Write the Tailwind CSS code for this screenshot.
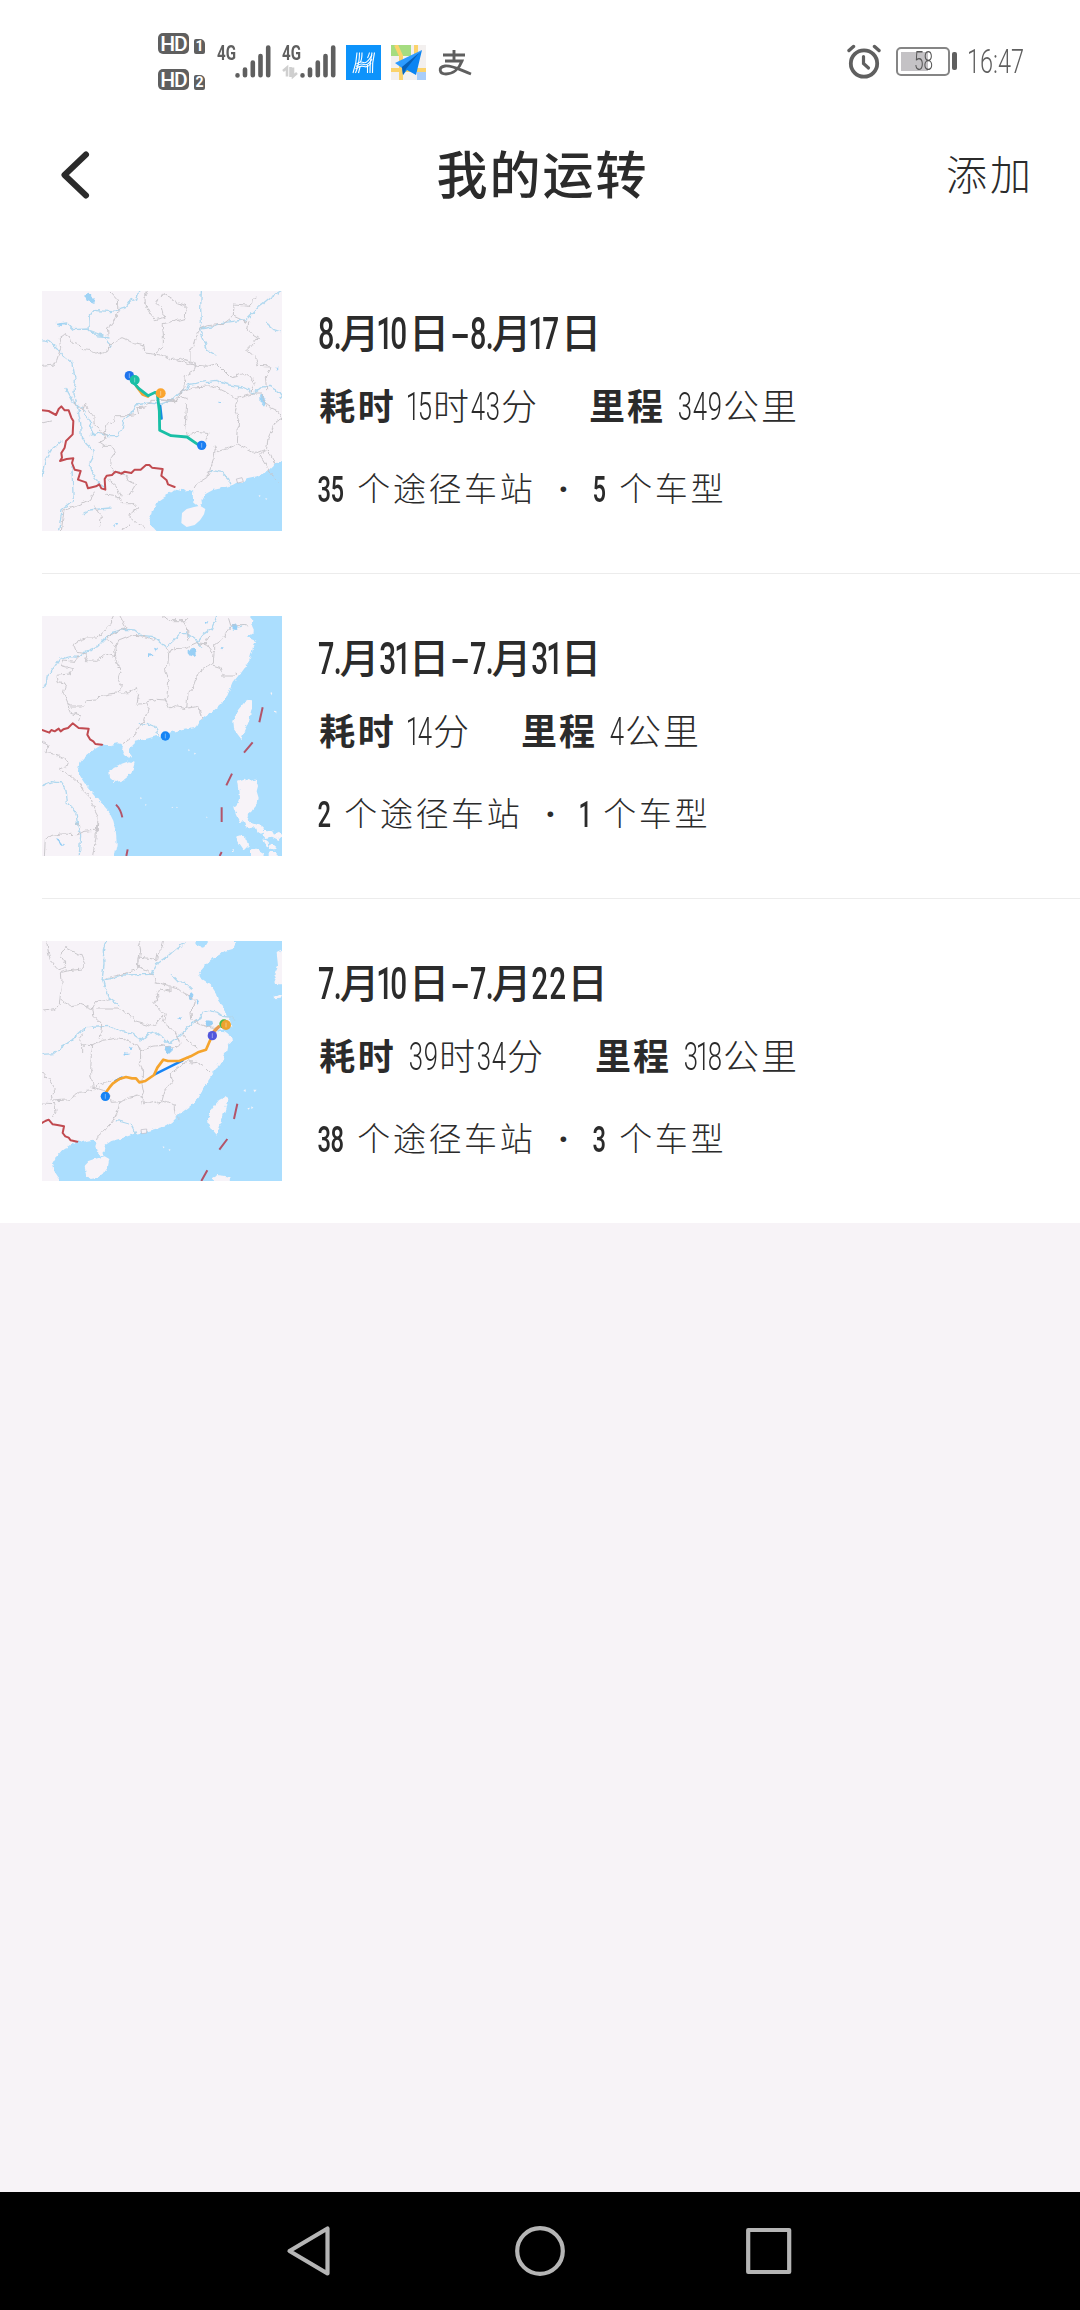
<!DOCTYPE html>
<html lang="zh-CN">
<head>
    <meta charset="UTF-8">
    <meta name="viewport" content="width=device-width, initial-scale=1.0">
    <title>我的运转</title>
    <script src="https://cdn.jsdelivr.net/npm/@tailwindcss/browser@4"></script>
</head>
<body class="w-[1080px] h-[2310px] flex flex-col bg-[#f7f3f7] text-[#2b2b2b] font-[Roboto,'Noto_Sans_CJK_SC',sans-serif] overflow-hidden">

    <!-- Status bar -->
    <header class="h-[122px] shrink-0 bg-white flex justify-between pl-[158px] pr-[55px] text-[#5f5f5f]">
        <div class="flex h-full">
            <div class="flex flex-col gap-[15px] pt-[33px] w-[59px]">
                <div class="flex items-end gap-[5px]">
                    <span class="w-[31px] h-[21px] rounded-[5px] bg-[#5f5f5f] text-white text-[21px] font-medium leading-[22px] text-center tracking-[-1px]">HD</span>
                    <span class="w-[11px] h-[15px] rounded-[2px] rounded-tr-[5px] bg-[#5f5f5f] text-white text-[14px] font-bold leading-[15px] text-center">1</span>
                </div>
                <div class="flex items-end gap-[5px]">
                    <span class="w-[31px] h-[21px] rounded-[5px] bg-[#5f5f5f] text-white text-[21px] font-medium leading-[22px] text-center tracking-[-1px]">HD</span>
                    <span class="w-[11px] h-[15px] rounded-[2px] rounded-tr-[5px] bg-[#5f5f5f] text-white text-[14px] font-bold leading-[15px] text-center">2</span>
                </div>
            </div>
            <div class="flex pt-[43px] w-[65px]">
                <span class="w-[18px] h-5 leading-5"><span class="inline-block origin-left scale-x-[.72] text-[21px] font-bold">4G</span></span>
                <svg class="w-9 h-9" viewBox="0 0 36 36" stroke="#5f5f5f" stroke-width="4.6" stroke-linecap="round"><path d="M2.5 32.4v.1M10 26.500v5.800M17.800 19.500v12.800M25.500 13v19.300M33.200 4.500v27.800"/></svg>
            </div>
            <div class="flex pt-[43px] w-[64px]">
                <div class="w-[18px]">
                    <div class="h-5 leading-5"><span class="inline-block origin-left scale-x-[.72] text-[21px] font-bold">4G</span></div>
                    <svg class="w-4 h-4" viewBox="0 0 16 16" fill="none" stroke="#cfcfcf" stroke-width="2.600"><path d="M1 8l4-3.500v9M15 10l-4 3.500v-9M8.500 4v10"/></svg>
                </div>
                <svg class="w-9 h-9" viewBox="0 0 36 36" stroke="#5f5f5f" stroke-width="4.6" stroke-linecap="round"><path d="M2.5 32.4v.1M10 26.500v5.800M17.800 19.500v12.800M25.500 13v19.300M33.200 4.500v27.800"/></svg>
            </div>
            <div class="flex gap-[10px] pt-[45px]">
                <svg class="w-[35px] h-[35px]" viewBox="0 0 35 35" fill="none">
                    <rect width="35" height="35" fill="#0d93fb"/>
                    <g stroke="#fff" stroke-width="1.1">
                        <path d="M11 7.500Q10.500 18 7 28M13.500 7.500Q13.500 19 9.500 28M16 7.500Q16 14 14.500 17M12.500 28L14 22"/>
                        <path d="M28.500 7.500Q26 18 26.500 28M26 7.500Q23.500 18 24 28M23.500 7.500Q23 10 21.500 13M21.500 28V20"/>
                        <path d="M10.500 19Q14 16 17.500 17.500T26 10M10 21.500Q14 18 18 19.500T26 14M9.500 24Q14 20 18 21.500T25 18"/>
                    </g>
                </svg>
                <svg class="w-[35px] h-[35px]" viewBox="0 0 35 35">
                    <rect width="35" height="35" fill="#f3f0ef"/>
                    <path d="M0 0h20v11H0z" fill="#a5dc80"/>
                    <path d="M26 26h9v9h-9z" fill="#a8cdfa"/>
                    <path d="M5 0l5 11v24M0 25h35M25 0v12" stroke="#fbd36b" stroke-width="4" fill="none"/>
                    <path d="M31 5L4 18l7 5z" fill="#2d9bff"/>
                    <path d="M31 5L11 22l1 8 4-5 9 5z" fill="#0a84f2"/>
                    <path d="M28 8L11 22l1 8 3-6z" fill="#0860b8"/>
                </svg>
                <svg class="w-[36px] h-[35px] ml-[1px]" viewBox="0 0 36 35" fill="none" stroke="#5f5f5f" stroke-width="2.900">
                    <path d="M6 10h22M17 5v11M8 16h17C22 24 16 29 9 29 2 29 1 22 8 21 15 20 23 25 34 29"/>
                </svg>
            </div>
        </div>
        <div class="flex h-full">
            <svg class="w-[34px] h-[35px] mt-[44px]" viewBox="0 0 34 35" fill="none" stroke="#5f5f5f" stroke-linecap="round">
                <circle cx="17" cy="19.500" r="13.200" stroke-width="3.800"/>
                <path d="M16.500 12.500v7l5 4.500" stroke-width="3.200"/>
                <path d="M2 6.500l4.500-4M32 6.500l-4.500-4" stroke-width="3.400"/>
            </svg>
            <div class="w-[54px] h-[29px] mt-[47px] ml-[15px] border-2 border-[#858585] rounded-[5px] p-[3px] relative">
                <div class="w-[27px] h-full bg-[#c4c2c5]"></div>
                <span class="absolute left-[16px] top-0 leading-[25px] text-[26px] font-light text-[#555] origin-left scale-x-[.66]">58</span>
            </div>
            <div class="w-[5px] h-[18px] mt-[52px] ml-[2px] rounded-[2px] bg-[#5f5f5f]"></div>
            <div class="w-[58px] h-9 mt-[43px] ml-[10px]"><span class="inline-block origin-left scale-x-[.69] text-[34px] leading-9 font-light">16:47</span></div>
        </div>
    </header>

    <!-- Title bar -->
    <div class="h-[127px] shrink-0 bg-white flex justify-between pl-[58px] pr-[46px]">
        <div class="w-[81px] pt-[28px]">
            <svg class="w-[34px] h-[50px]" viewBox="0 0 34 50" fill="none" stroke="#2b2b2b" stroke-width="6" stroke-linecap="round" stroke-linejoin="round"><path d="M28 4.500L6.500 25 28 45.500"/></svg>
        </div>
        <h1 class="pt-[20px] h-[70px] leading-[70px] text-[51px] tracking-[2px] font-medium">我的运转</h1>
        <div class="pt-[19px] h-[70px] leading-[70px] text-[41px] tracking-[3px] font-light">添加</div>
    </div>

    <!-- Trip list -->
    <main class="bg-white pl-[42px] shrink-0">
        <section class="flex gap-9 py-[42px] h-[325px] border-b border-[#ececec]">
            <svg class="w-[240px] h-[240px] shrink-0" viewBox="36 34 720 720" fill="none" stroke-linejoin="round" stroke-linecap="round">
                <!-- roughens coasts, rivers and borders -->
                <filter id="rough" filterUnits="userSpaceOnUse" x="0" y="0" width="800" height="800" color-interpolation-filters="sRGB">
                    <feTurbulence type="fractalNoise" baseFrequency="0.06" numOctaves="2" seed="4"/>
                    <feDisplacementMap in="SourceGraphic" scale="16" xChannelSelector="R" yChannelSelector="G"/>
                </filter>
                <path fill="#f7f3f8" d="M36 34h720v720H36z"/>
                <path filter="url(#rough)" fill="#abdefe" d="M796 522l-40 20-18 10-18 18-22 12-20 8-28 6-12 14-16-2-14 8-30 8-28 6-18 10-12 8-6 10 2 14-10 6-16-12-2-14 2-16-12-6-22 4-18-4-14 6-20 14-16 10-12 18-10 16-4 16-6 12 6 14 12 12 12 16V796H796z"/>
                <path fill="#f7f3f8" d="M456 700l14-12 22-6 18-4 16 10-4 16-12 18-16 14-24 6-16-12zM686 646l6 2-4 4zM706 655l6 2-4 4z"/>
                <path stroke="#b9b9c2" stroke-width="2" fill="#f7f3f8" d="M620 598l16-4 4 12-16 4z"/>
                <g filter="url(#rough)" stroke="#b0d8ef" stroke-width="4">
                    <path d="M36 180l24 6 22 20 14 20 30 24 10 50-4 40 10 40 10 50 2 46 18 20 20 16-2 20-12 22 10 24 14 30 20 14M108 326l22 40 26 20 16 26 14 30-2 24 24-8 30 10 26 0 12-20 6-30 20-14 14-28 40-6 34 4 34-12 20-20 20-12 14-16 50-8 30-4 40 14 40 6 34 18 22-18 24-2 24 14 14 20 24-20 20 0 20-16M514 34l-2 50 2 40-6 24 40-6 40-14 60-8 34-34 40-34 30-18M508 148l14 30 10 34 26 14M80 134l30-4 20 20 44-2 26 20 40 4M244 200l-28-34-38-14-2-40 16-20 50 4 40-10 14-20 24-8 6-24M36 590l10-50 20-32 30-24M126 560l2 60 2 44-34 26-10 60M240 685l-60 6-20 14M540 572l36 6 20 20 6 14M710 130l22 20 18 6"/>
                </g>
                <path filter="url(#rough)" fill="#9fd3f5" d="M162 48l14-6 18 14-4 14-16-6zM76 134l26-4-4 10zM690 344l12 6 8 14-8 14-10-12zM735 264l12 0-6 6zM252 734l10-2-4 8zM564 366l20 2-16 4z"/>
                <g filter="url(#rough)" stroke="#c6c4c8" stroke-width="2.800">
                    <path d="M36 260l36-4 8-14 12-36-4-30 16-12 18 10 4 16 24 8 10 12 30 4 16 10 26-8 4-14 22-20 18-8 14 6 22 12 30 6 2 22 50 6 30 14 28-4 24 8 22 10-6 20-26 14-4 30-14 28-14 20-38-4-30 0-20 20-24 2 4 20-36 4-34 0-2 18-26 8-6 24 6 20-22 12 14 10 24 0 12 18-12 16-2 26 10 16 30 6 16 22 22 10-12 20-14 8M444 240l36 14 50 6 30-8 40 40 40-10 20 10 14 20-12 26M480 252v-44l10-4 18-58M508 148l24-10 46-4 32-24 2-34 48 4 18-28M612 110l44 20-4 22 34 20-24 30-12 12 28 22 6 24 40 2-18 30 4 40M240 34l22 24 2 40-14 34-18 10 2 24M344 34l2 40 12 24 18 22 26-6-8-30-16-16 24-26 40 26 26 10-2 38-46 12-24 4 4 30 0 40-24 20M448 338l40-16 60-4 50 24 20 16 56-18 20 0 16 38 30 14 16 24-20 10-22 50-4 30-20 22 18 30 14 22 22 26M470 372l-4 60 6 34 30-8 32 4-6 22M472 360l-20-8-18 12-44-4M624 360l-8 36 10 26-4 70-30 14-30 10-10-14M556 502l-4 34-12 34-10 24-30 18-8 14M622 492l54 30 30-12 16 14 14 30M352 34l-10 20M130 364l12 14 16 18 6-22 20 30 8 10 0 20 26 24 16 10"/>
                    <path d="M190 640l-12 20-40 20-36 12-8 60M230 644l30 4 16 24 36 0 14 14-30 20 20 20 30 20M234 600l24 20 14 32M36 430l26-6M210 740l4-28-20-30M276 750l22-14"/>
                </g>
                <path stroke="#c14a50" stroke-width="6" d="M36 392l20 2 22 12 8-18 8-8 10 12 12 0 8 22 6 10-2 40-20 20-4 20-10 16 2 14-6 10 20-6 20-2-4 14 8 20 18 4-8 26 24 8 6 18 24-6 10-6 6 12 12 4-2-32 6-10 16-2 10-10 18 6 10-6 20 4 10-10 18 0 16-14 10 0 8 8 32 4-4 20 16 14 4 12 20 8"/>
                <g stroke-width="9">
                    <path stroke="#f2a134" d="M320 320l18 24 16 6"/>
                    <path stroke="#168be0" d="M390 380l4 36"/>
                    <path stroke="#19bfa6" stroke-width="8.500" d="M306 304l20 22 28 22 22-10 6 6 6 50 1 58 34 16 48 4 32 22"/>
                </g>
                <circle cx="298" cy="288" r="14" fill="#1f73ed"/>
                <circle cx="314" cy="301" r="15" fill="#19bfa6"/>
                <circle cx="392" cy="341" r="15" fill="#fba52f"/>
                <circle cx="515" cy="497" r="14" fill="#1b7ef2"/>
                <path stroke="#fff" stroke-opacity=".6" stroke-width="2" d="M298 282v12M314 295v12M392 335v12M515 491v12"/>
            </svg>
            <div class="flex flex-col pt-[13px]">
                <div data-date="8.月10日-8.月17日" class="h-[60px] flex items-center font-medium"></div>
                <div data-time="15时43分" data-mileage="349公里" class="h-[87px] flex items-center"></div>
                <div data-stations="35" data-models="5" class="h-[77px] flex items-center"></div>
            </div>
        </section>

        <section class="flex gap-9 py-[42px] h-[325px] border-b border-[#ececec]">
            <svg class="w-[240px] h-[240px] shrink-0" viewBox="36 36 720 720" fill="none" stroke-linejoin="round" stroke-linecap="round">
                <path fill="#abdefe" d="M36 36h720v720H36z"/>
                <path filter="url(#rough)" fill="#f7f3f8" d="M5 5H650L660 36 670 48 666 68 672 82 650 96 662 104 678 112 670 124 666 142 658 170 642 192 626 214 608 236 598 260 588 284 570 304 546 324 526 338 508 350 498 368 458 376 434 382 404 392 372 398 344 406 312 414 298 428 298 442 302 452 296 464 282 454 276 436 280 422 264 418 240 424 216 422 196 434 180 446 162 462 148 478 144 498 152 518 168 542 188 566 210 592 236 622 250 650 258 684 260 720 254 756V796H5z"/>
                <path filter="url(#rough)" fill="#f7f3f8" d="M238 502l14-14 24-8 24-8 14 4-6 22-12 18-18 14-24 4-14-12zM654 290l12 2 0 20-8 34-16 38-8 22-10-14-12-16-2-24 14-34 18-22zM624 530l18-6 20 6 16-4 6 20-4 16 6 20-14 22-6 20-14 12 6 18 24 8 14 4 8 18-10 4-18-16-20-6-10 4-4-18-14 2-10-22-8-22 12-4 8-20-2-28zM618 698l16-4 16 12 4 20-12 12-14-20zM676 670l14 6-2 10-10-4zM700 680l12 2 14-4 8 14 14-6 6 12-8 10-20-10-20 4-8-10zM700 702l16 12 2 16-12-8zM724 716l16 14-8 10-16-4zM660 736l20-2 22 14-4 28h-38zM716 744h24v30h-24zM604 738l8 2-4 6zM718 268l10-4-4 10zM734 320l10 2-8 4z"/>
                <path fill="#f7f3f8" d="M474 436l6 2-4 4zM492 446l6 2-4 4zM330 580l6 2-4 4zM346 600l4 2-4 4zM426 608l4 4-5 0zM440 608l4 4-5 0zM528 638l5 1-3 3z"/>
                <path filter="url(#rough)" stroke="#b0d8ef" stroke-width="4" d="M36 252l12-8 4-30 22-26 14-22 34-8 26 2 20-18 34-14 22-22 18-20 42-10 30 2 20 16 36 4 18 16 20 16 24-22 20-22 16 0 30 22 18 20M500 114l20-24 24-16 12-26 4-12M600 70l30-2 18-6M36 545l28-12 30 4 14 20 4 40 26 30 6 40 8 26-4 60M328 362l20-4 24 8 14 24"/>
                <path filter="url(#rough)" fill="#98cff5" d="M476 138l16-4 6 18-12 8-10-12zM372 128l12 4-6 12zM354 150l22 4-22 6zM606 62l14-4 2 20-14-2zM520 54l12-2-4 8zM570 130l8 0-4 6zM78 706l10 2 14 18-10-2z"/>
                <g filter="url(#rough)" stroke="#c6c4c8" stroke-width="2.800">
                    <path d="M250 36l-20 40-30 26-30 0-16 4-22 16 6 22 34 6-6 20 34 2 28-22 24 8 10-24-26-24-4-14 30-14 26-10-18-36M144 158l-8 14-38-4-6 16 36 10-10 16-40 4 4 22 26 4-8 26 18 40 40 0 12-16 30-2 16-14 36-6 22-18-10-26 8-26-14-30-4-30 12-30 30-12 30-2 24 6 26 8M264 268l32-2 22-14 8 20-6 30 30-6 6 12-12 40-20 24-10 20-16 14-18 12M352 294l28-8 26 2 14 28 16-8 30 6 40-8 10 40M406 132l10 16-2 32-10 24 12 30-6 50M416 148l18-14 30-2 36-16 30 4 22 28-2 30-20 10-26 20-12 36-18 24-4 46M554 140l0-16 24-18 18-32 20-12 36 0M550 184l20 6 6 26 34 0 10-8M458 50l14 22 4 40M400 36l20 14 50 0M524 120l12-20M602 64l-6-20M112 306l10 22 30 8-6 14M36 412l20 14-6 20 32 6 26 12 6 22-26 10 18 12 20 10 20 18 14 24 20 20 10 32 14 26-2 40-40 4-18 10-50-2-28 4-20 12-4 70M200 662l-2 40-10 52M150 666l-10-8"/>
                </g>
                <path stroke="#c14a50" stroke-width="6" d="M36 378l22 8 6-8 10 4 12-8 6 8 8-6 14-4 14-14 18 14 30 2-4 18 8 14 10 6 6 8 20 2"/>
                <path stroke="#b35469" stroke-width="6" stroke-linecap="butt" d="M698 310l-10 45M668 415l-26 31M606 509l-17 35M575 610v44M258 602q14 14 19 38M293 736l-4 20M575 744l-6 12"/>
                <circle cx="406" cy="396" r="14" fill="#1684f5"/>
                <path stroke="#fff" stroke-opacity=".6" stroke-width="2" d="M406 390v12"/>
            </svg>
            <div class="flex flex-col pt-[13px]">
                <div data-date="7.月31日-7.月31日" class="h-[60px] flex items-center font-medium"></div>
                <div data-time="14分" data-mileage="4公里" class="h-[87px] flex items-center"></div>
                <div data-stations="2" data-models="1" class="h-[77px] flex items-center"></div>
            </div>
        </section>

        <section class="flex gap-9 py-[42px] h-[324px]">
            <svg class="w-[240px] h-[240px] shrink-0" viewBox="36 34 720 720" fill="none" stroke-linejoin="round" stroke-linecap="round">
                <path fill="#abdefe" d="M36 34h720v720H36z"/>
                <path filter="url(#rough)" fill="#f7f3f8" d="M5 5H495L496 38 502 50 516 54 528 44 534 34V5H610V34L616 44 608 58 578 66 558 78 546 90 524 110 510 126 504 142 526 156 546 172 558 190 564 212 578 232 590 248 600 272 604 290 578 298 556 304 584 308 604 322 606 336 592 346 588 366 580 386 562 410 546 436 524 470 506 504 480 530 450 552 428 576 408 590 370 600 340 608 310 614 276 626 244 634 226 646 222 662 220 676 210 680 200 664 196 650 200 638 182 632 160 636 142 632 120 646 96 662 78 682 66 702 70 724 80 740 94 756V796H5zM740 70l16-8h40v102h-50l-14-4 8-20-6-10 10-22zM730 202l16-8 10 2-4 8-18 2z"/>
                <path filter="url(#rough)" fill="#f7f3f8" d="M164 708l14-14 24-8 22-6 14 8-4 22-16 22-16 12-20 4-14-12zM570 508l12-6 10 6-4 22-10 34-10 28-8 26-12-14-12-20-2-18 8-22 16-22zM548 742l12-6 22 2 16 4 6 32h-54z"/>
                <path fill="#f7f3f8" d="M640 484l6-6 2 8zM670 480h10l-6 8zM652 536l8-2-4 6zM664 530l6 4-6 4zM398 650l6 2-4 4zM416 658l6 2-4 4z"/>
                <path stroke="#b9b9c2" stroke-width="2" fill="#f7f3f8" d="M334 600l16-2 0 12-14 2z"/>
                <path filter="url(#rough)" stroke="#b0d8ef" stroke-width="4" d="M228 34l-8 30 2 40-6 48 40-8 20-8 90-2 16-34 30-20 30-26 20-12M218 154l8 24 14 30 26 18M36 374l34-2 26-22 24-14 26-24 20-18 40-2 34-2 34 16 30 4 30 22 20-20 20-6 30 24 14 10 30-22 18-16 20-20 24-16 6-16 20-8 26 6 16 12 24 2 12 10M424 136l20 20 20 2 20 20M258 572l24 6 20 6 12 24"/>
                <path filter="url(#rough)" fill="#98cff5" d="M406 346l14 4 6 14-10 10-12-14zM478 188l14 8-4 16-12-10zM498 212l12 2-4 8zM528 272l16 2 4 14-14 6-10-12zM442 262l18 2-10 10zM280 368l22 2-20 6zM296 352l12-2-4 10z"/>
                <g filter="url(#rough)" stroke="#c6c4c8" stroke-width="2.800">
                    <path d="M50 34l6 40 8 22 20 24 26-8-12-20-10-16 20-22 44 22 12 26-8 16-44 6-18 4 2 30-4 30-4 36-14 16-34 4M92 212l30 16 30-4 34 14 14-24 36-6M188 234l4 26 24 26-8 40M326 34l6 30-4 20-4 34-48 16-50 12M328 82l52 8 4-20 10-8 6-28M324 84l-2 26 34 14M360 130l12 8 4 18 44 14 0 14-30-6-8 16 4 18-16 4 20 24 16 16-6 20 10 14 24 16 14 28M200 238l64 0 30 14 20 24 50 14 16-8 20-24M420 168l20 6 14 12 20 10 22 16-4 20-12 12 2 26 26 14 40 12 14-2 20-10M160 310l-12 16 6 20 34 2 30-16 50-8 40 16 16 10 6 14 36-14 40-4 18 10 20-4M188 348l-4 24-2 60 8 40 34-14 24-6M330 356l2 26-4 20 10 20-2 40 6 30-8 14 2 14M36 424l22 26 18 28-12 18 4 18 50-4 30-22 44-6M186 472l34 10 20 22 4 14 30-2 20-12 30-8 10 4 12 22 30-8 14 8 16-10 26 14 4 30 10 10M270 518l-8 30-14 26-20 22-22 18-6 16M396 514l8-30 22-30-2-24 28-22 18-14 10-14M470 380l10 20 22-2 18 12 18 18M456 310l18 22 24 20M450 340l-10 16M36 520l38 2 4 22-10 20M158 348l0 20"/>
                </g>
                <path stroke="#c14a50" stroke-width="6" d="M36 580l10-6 10-4 12 14 14 2 20 4-4 20 8 10 10 4 6 8 20 4"/>
                <path stroke="#b35469" stroke-width="6" stroke-linecap="butt" d="M622 522l-10 46M592 628l-24 32M532 722l-18 32"/>
                <path stroke="#1684f5" stroke-width="7" d="M374 434l84-42M256 454l20-10"/>
                <path stroke="#f5a42d" stroke-width="8" d="M228 488l10-14 10-12 20-14 20-6 18 4 12 0 10 12 18-4 26-18 10-22 18-24 14 4 34 0 34-14 22-12 24-8 14-32 10-24 14-14"/>
                <path stroke="#e59a55" stroke-width="9" d="M552 306l14-14"/>
                <circle cx="582" cy="283" r="14" fill="#49b848"/>
                <circle cx="588" cy="286" r="15" fill="#eda32f"/>
                <circle cx="547" cy="318" r="14" fill="#5156dc"/>
                <circle cx="226" cy="500" r="14" fill="#1684f5"/>
                <path stroke="#fff" stroke-opacity=".6" stroke-width="2" d="M588 280v12M547 312v12M226 494v12"/>
            </svg>
            <div class="flex flex-col pt-[13px]">
                <div data-date="7.月10日-7.月22日" class="h-[60px] flex items-center font-medium"></div>
                <div data-time="39时34分" data-mileage="318公里" class="h-[87px] flex items-center"></div>
                <div data-stations="38" data-models="3" class="h-[77px] flex items-center"></div>
            </div>
        </section>
    </main>

    <!-- Navigation keys -->
    <nav class="mt-auto h-[118px] shrink-0 bg-black flex justify-between items-center px-[284px]">
        <svg class="w-[50px] h-[54px]" viewBox="0 0 50 54" fill="none" stroke="#b5b5b5" stroke-width="4.200" stroke-linejoin="round"><path d="M43.500 4.500v45L5.500 27z"/></svg>
        <svg class="w-[54px] h-[54px]" viewBox="0 0 54 54" fill="none" stroke="#b5b5b5" stroke-width="4.200"><circle cx="27" cy="27" r="22.800"/></svg>
        <svg class="w-[50px] h-[54px]" viewBox="0 0 50 54" fill="none" stroke="#b5b5b5" stroke-width="4.200" stroke-linejoin="round"><path d="M2.200 6h41v42h-41z"/></svg>
    </nav>

    <script>
        // narrow digits: each one takes its own advance, "1" is slimmer
        function digits(text, size, one, other, cls) {
            return [...text].map(c => {
                const w = c === "1" ? one : other;
                return `<span class="flex justify-center shrink-0" style="width:${w}px"><span class="${cls}" style="font-size:${size}px">${c}</span></span>`;
            }).join("");
        }

        function han(text, size, width, cls) {
            return [...text].map(c => `<span class="flex justify-center shrink-0 ${cls}" style="width:${width}px;font-size:${size}px">${c}</span>`).join("");
        }

        function split(text, num, word) {
            return text.match(/\d\.|\d+|\D/g).map(p => /\d/.test(p) ? num(p) : word(p)).join("");
        }

        document.querySelectorAll("[data-date]").forEach(el => {
            el.innerHTML = split(el.dataset.date,
                p => p.endsWith(".")
                    ? `<span class="w-[20.5px] shrink-0"><span class="inline-block origin-left scale-x-[.64] text-[45px] tracking-[-1px]">${p}</span></span>`
                    : digits(p, 45, 11, 17.5, "scale-x-[.66]"),
                p => {
                    if (p === "-") return `<span class="w-5 flex justify-center items-center text-[42px]"><span class="scale-x-[1.4]">-</span></span>`;
                    return p === "月" ? han(p, 40, 41, "pl-[1px] pt-[2px]") : han(p, 41, 42, "pt-[2px]");
                });
        });

        document.querySelectorAll("[data-time]").forEach(el => {
            const value = t => split(t, p => digits(p, 39, 9, 15, "scale-x-[.66] font-light"), p => han(p, 36, 38, "font-light"));
            el.innerHTML = han("耗时", 36, 38.5, "font-bold") + `<span class="w-[13px]"></span>` + value(el.dataset.time)
                + `<span class="w-[50px]"></span>` + han("里程", 36, 38, "font-bold") + `<span class="w-[13px]"></span>` + value(el.dataset.mileage);
        });

        document.querySelectorAll("[data-stations]").forEach(el => {
            const count = t => digits(t, 36, 10, 13, "scale-x-[.66] font-medium") + `<span class="w-3"></span>`;
            el.innerHTML = count(el.dataset.stations) + han("个途径车站", 33, 35.6, "font-light")
                + `<span class="w-[59px] flex justify-center text-[36px] font-bold">·</span>`
                + count(el.dataset.models) + han("个车型", 33, 35.6, "font-light");
        });
    </script>

</body>
</html>
